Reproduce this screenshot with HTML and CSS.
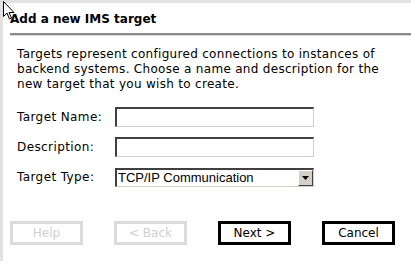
FILE: index.html
```html
<!DOCTYPE html>
<html lang="en">
  <head>
    <meta charset="UTF-8" />
    <title>Add a new IMS target</title>
    <link rel="stylesheet" href="styles.css">
  </head>
  <body>
    <!-- mouse pointer -->
    <svg class="cursor" width="12" height="19" viewBox="0 0 12 19">
      <path d="M0.5 0.5 L0.5 15.5 L4 12 L6.5 18 L8.5 17 L6 11.5 L11 11.5 Z" fill="#fff" stroke="#000" stroke-width="1"/>
    </svg>

    <div class="panel">
      <h1 class="title">Add a new IMS target</h1>
      <div class="rule"></div>

      <p class="intro">
        Targets represent configured connections to instances of
        backend systems. Choose a name and description for the
        new target that you wish to create.
      </p>

      <div class="form">
        <label class="label">Target Name:</label>
        <input type="text" class="field" />
        <label class="label">Description:</label>
        <input type="text" class="field" />
        <label class="label">Target Type:</label>
        <div class="select">
          <span class="select-text">TCP/IP Communication</span>
          <span class="select-arrow">
            <svg width="7" height="4" viewBox="0 0 7 4"><path d="M0 0 H7 L3.5 4 Z" fill="#000"/></svg>
          </span>
        </div>
      </div>

      <div class="buttons">
        <button class="btn disabled">Help</button>
        <button class="btn disabled">&lt; Back</button>
        <button class="btn">Next &gt;</button>
        <button class="btn">Cancel</button>
      </div>
    </div>
  </body>
</html>
```

FILE: styles.css
```css
body {
  margin: 0;
  background-color: #fff;
  font-family: "DejaVu Sans", Verdana, sans-serif;
  font-size: 12px;
  color: #000;
  width: 411px;
  height: 264px;
  overflow: hidden;
  position: relative;
}

.cursor {
  position: absolute;
  left: 3px;
  top: 1px;
}

.panel {
  border-top: 3px solid #e2e2e2;
  border-left: 3px solid #e2e2e2;
  height: 261px;
  box-sizing: border-box;
  padding-left: 7px;
}

.title {
  margin: 0;
  padding-top: 9px;
  font-size: 12px;
  font-weight: bold;
  line-height: 14px;
  height: 16px;
}

.rule {
  margin-top: 5px;
  border-top: 2px solid #8c8c8c;
  border-bottom: 1px solid #d8d8d8;
}

.intro {
  margin: 11px 0 0 7px;
  line-height: 15px;
  width: 385px;
  letter-spacing: 0.3px;
}

.form {
  display: grid;
  grid-template-columns: 98px 199px;
  row-gap: 10px;
  margin: 15px 0 0 7px;
  align-items: center;
}

.label {
  line-height: 20px;
  letter-spacing: 0.4px;
}

.field {
  box-sizing: border-box;
  height: 20px;
  margin: 0;
  padding: 0;
  border: 1px solid #d4d0c8;
  border-top: 2px solid #404040;
  border-left: 2px solid #404040;
  background: #fff;
}

.select {
  box-sizing: border-box;
  height: 19px;
  display: flex;
  border: 1px solid #d4d0c8;
  border-top: 2px solid #404040;
  border-left: 2px solid #404040;
}

.select-text {
  flex: 1;
  font-family: "Liberation Sans", Arial, sans-serif;
  font-size: 13px;
  line-height: 15px;
  padding-left: 1px;
}

.select-arrow {
  width: 15px;
  background: #d4d0c8;
  border-left: 1px solid #fff;
  border-top: 1px solid #fff;
  border-right: 1px solid #404040;
  border-bottom: 1px solid #404040;
  box-sizing: border-box;
  display: flex;
  align-items: center;
  justify-content: center;
}

.buttons {
  display: flex;
  gap: 31px;
  margin-top: 34px;
}

.btn {
  box-sizing: border-box;
  width: 73px;
  height: 24px;
  margin: 0;
  padding: 0;
  background: #fff;
  border: 3px solid #000;
  font-family: "DejaVu Sans", Verdana, sans-serif;
  font-size: 12px;
  color: #000;
}

.btn.disabled {
  border-color: #dcdcdc;
  color: #d0d0d0;
}
```
